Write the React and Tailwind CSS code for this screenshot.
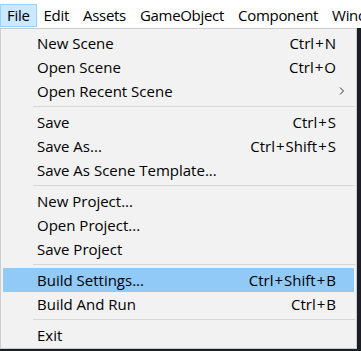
const menuBar = ['File', 'Edit', 'Assets', 'GameObject', 'Component', 'Window'];

const groups = [
  [
    { label: 'New Scene', shortcut: 'Ctrl+N' },
    { label: 'Open Scene', shortcut: 'Ctrl+O' },
    { label: 'Open Recent Scene', submenu: true },
  ],
  [
    { label: 'Save', shortcut: 'Ctrl+S' },
    { label: 'Save As...', shortcut: 'Ctrl+Shift+S' },
    { label: 'Save As Scene Template...' },
  ],
  [
    { label: 'New Project...' },
    { label: 'Open Project...' },
    { label: 'Save Project' },
  ],
  [
    { label: 'Build Settings...', shortcut: 'Ctrl+Shift+B', active: true },
    { label: 'Build And Run', shortcut: 'Ctrl+B' },
  ],
  [{ label: 'Exit' }],
];

function Shortcut({ text }) {
  // spaced plus signs like the Windows menu
  const parts = text.split('+');
  return (
    <span className="flex items-center">
      {parts.map((p, i) => (
        <span key={i} className="flex items-center">
          {i > 0 && <span className="px-[1px]">+</span>}
          {p}
        </span>
      ))}
    </span>
  );
}

function MenuItem({ item }) {
  return (
    <div
      className={`flex h-[24px] items-center mx-[2px] pl-[34px] pr-[18px] ${
        item.active ? 'bg-[#91c9f7]' : ''
      }`}
    >
      <span className="flex-1">{item.label}</span>
      {item.shortcut && <Shortcut text={item.shortcut} />}
      {item.submenu && (
        <svg width="8" height="10" viewBox="0 0 8 10" className="mr-[-10px]">
          <path d="M2 1.5 L5.5 5 L2 8.5" fill="none" stroke="#333" strokeWidth="1" />
        </svg>
      )}
    </div>
  );
}

export default function App() {
  return (
    <div
      className="w-[361px] h-[351px] bg-[#1c1e26] flex flex-col text-[15px] text-black leading-none overflow-hidden"
      style={{ fontFamily: '"Open Sans", "Noto Sans CJK KR", sans-serif' }}
    >
      <div className="h-[28px] bg-white flex items-center shrink-0 overflow-hidden tracking-[-0.3px]">
        {menuBar.map((m, i) => (
          <div
            key={m}
            className={`h-[23px] mt-[2px] flex items-center px-[6px] shrink-0 whitespace-nowrap border ${
              i === 0 ? 'bg-[#cce8ff] border-[#99d1ff]' : 'border-transparent'
            }`}
          >
            {m}
          </div>
        ))}
      </div>
      <div className="w-[357px] bg-[#f2f2f2] border border-[#cccccc] pt-[2px] pb-[1px]">
        {groups.map((g, gi) => (
          <div key={gi}>
            {gi > 0 && (
              <div className="h-[7px] flex items-center pl-[32px] pr-[1px]">
                <div className="h-px w-full bg-[#d7d7d7]" />
              </div>
            )}
            {g.map((item) => (
              <MenuItem key={item.label} item={item} />
            ))}
          </div>
        ))}
      </div>
    </div>
  );
}
